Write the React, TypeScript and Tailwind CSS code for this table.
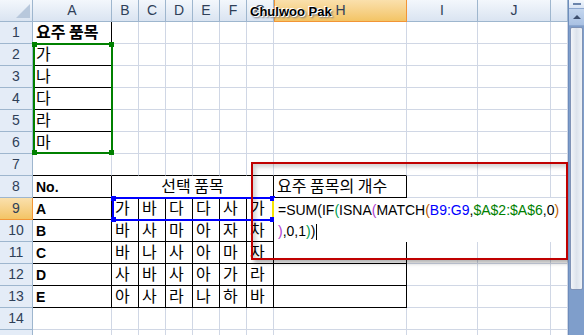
import React from "react";

type Cell = {
    w: string;
    t?: string;
    kr?: boolean;
    bold?: boolean;
    rb?: boolean;
    bb?: boolean;
    nb?: boolean;
    center?: boolean;
};

const colNames = ["A", "B", "C", "D", "E", "F", "G", "H", "I", "J", ""];
const colW = ["w-[79px]", "w-[27px]", "w-[27px]", "w-[27px]", "w-[27px]", "w-[27px]", "w-[27px]", "w-[133px]", "w-[71px]", "w-[73px]", "w-[17px]"];

const picks: Record<number, [string, string[]]> = {
    9: ["A", ["가", "바", "다", "다", "사", "가"]],
    10: ["B", ["바", "사", "마", "아", "자", "차"]],
    11: ["C", ["바", "나", "사", "아", "마", "자"]],
    12: ["D", ["사", "바", "사", "아", "가", "라"]],
    13: ["E", ["아", "사", "라", "나", "하", "바"]],
};

function buildRow(r: number): Cell[] {
    const cells: Cell[] = colW.map((w) => ({ w }));
    if (r === 1) {
        cells[0] = { w: colW[0], t: "요주 품목", kr: true, bold: true, rb: true, bb: true };
    }
    if (r >= 2 && r <= 6) {
        cells[0] = { w: colW[0], t: ["가", "나", "다", "라", "마"][r - 2], kr: true, rb: true, bb: true };
    }
    if (r === 7) {
        for (let i = 0; i < 8; i++) cells[i].bb = true;
    }
    if (r === 8) {
        return [
            { w: colW[0], t: "No.", bold: true, rb: true, bb: true },
            { w: "w-[162px]", t: "선택 품목", kr: true, center: true, rb: true, bb: true },
            { w: colW[7], t: "요주 품목의 개수", kr: true, rb: true, bb: true },
            { w: colW[8] },
            { w: colW[9] },
            { w: colW[10] },
        ];
    }
    if (picks[r]) {
        const [label, items] = picks[r];
        cells[0] = { w: colW[0], t: label, bold: true, rb: true, bb: true };
        items.forEach((ch, i) => {
            cells[i + 1] = { w: colW[i + 1], t: ch, kr: true, rb: true, bb: true };
        });
        cells[7] = { w: colW[7], rb: true, bb: true };
        if (r === 9) {
            cells[8].nb = true;
            cells[9].nb = true;
            cells[10].nb = true;
        }
    }
    return cells;
}

function Square({ className }: { className: string }) {
    return <div className={"absolute w-[5px] h-[5px] " + className}></div>;
}

function ScrollBar() {
    return (
        <div className="w-[16px] h-[335px] shrink-0 flex flex-col bg-[#7f9ecb] border-l border-[#6d8cbc]">
            <div className="h-[9px] bg-gradient-to-b from-[#f4f8fd] to-[#d7e3f3] border-b border-[#8ea8cf] flex items-center justify-center">
                <div className="w-[8px] h-[2px] bg-[#6b84ab]"></div>
            </div>
            <div className="h-[17px] bg-gradient-to-b from-[#c4d6ee] to-[#a9c1e3] flex items-center justify-center border-b border-[#8ea8cf]">
                <div className="w-0 h-0 border-l-[4px] border-r-[4px] border-b-[4px] border-l-transparent border-r-transparent border-b-[#3d4f6e]"></div>
            </div>
            <div className="h-[263px] mx-[1px] mt-[1px] rounded-[2px] border border-[#8093b6] bg-gradient-to-r from-[#f3f5f9] via-[#dde3ec] to-[#eef2f7]"></div>
            <div className="flex-1 bg-[#7f9ecb]"></div>
        </div>
    );
}

export default function App() {
    const rows = Array.from({ length: 15 }, (_, i) => i + 1);

    return (
        <div className="w-[584px] h-[335px] overflow-hidden flex bg-white font-['Liberation_Sans','Noto_Sans_CJK_KR',sans-serif]">
            <div className="relative w-[568px] h-[335px] shrink-0 overflow-hidden">
                {/* column headers */}
                <div className="flex h-[22px]">
                    <div className="w-[33px] h-[22px] shrink-0 border-r border-b border-[#9eb6ce] bg-gradient-to-b from-[#f3f7fc] to-[#dae4f1] relative">
                        <svg className="absolute left-0 top-0" width="32" height="21" viewBox="0 0 32 21">
                            <polygon points="30,4 30,18 16,18" fill="#b8c8dc" />
                        </svg>
                    </div>
                    {colNames.map((c, i) => (
                        <div
                            key={i}
                            className={
                                colW[i] +
                                " h-[22px] shrink-0 border-r border-b flex items-center justify-center text-[14px] text-[#2f3f58] " +
                                (c === "H"
                                    ? "bg-gradient-to-b from-[#fae0ac] to-[#f3c464] border-b-[#f29536] border-r-[#f29536] border-l border-l-[#f29536]"
                                    : "bg-gradient-to-b from-[#f3f7fc] to-[#dae4f1] border-[#9eb6ce]")
                            }
                        >
                            {c}
                        </div>
                    ))}
                </div>

                {rows.map((r) => (
                    <div key={r} className="flex h-[22px]">
                        <div
                            className={
                                "w-[33px] h-[22px] shrink-0 border-r border-b flex items-center justify-center text-[14px] text-[#2f3f58] " +
                                (r === 9
                                    ? "bg-gradient-to-b from-[#fae0ac] to-[#f3c464] border-[#f29536]"
                                    : "bg-[#e4ecf7] border-[#9eb6ce]")
                            }
                        >
                            {r}
                        </div>
                        {buildRow(r).map((c, i) => (
                            <div
                                key={i}
                                className={
                                    c.w +
                                    " h-[22px] shrink-0 border-r border-b px-[3px] whitespace-nowrap overflow-visible text-[#000] " +
                                    (c.rb ? "border-r-black " : "border-r-[#d0d7e5] ") +
                                    (c.bb ? "border-b-black " : c.nb ? "border-b-white " : "border-b-[#d0d7e5] ") +
                                    (c.kr
                                        ? "font-['Noto_Sans_CJK_KR',sans-serif] text-[16px] leading-[19px] "
                                        : "text-[14px] leading-[22px] ") +
                                    (c.bold ? "font-bold " : "") +
                                    (c.center ? "text-center " : "")
                                }
                            >
                                {c.t}
                            </div>
                        ))}
                    </div>
                ))}

                {/* formula range A2:A6 */}
                <div className="absolute left-[33px] top-[43px] w-[80px] h-[111px] border-2 border-[#008000]"></div>
                <Square className="left-[32px] top-[42px] bg-[#008000]" />
                <Square className="left-[109px] top-[42px] bg-[#008000]" />
                <Square className="left-[32px] top-[150px] bg-[#008000]" />
                <Square className="left-[109px] top-[150px] bg-[#008000]" />

                {/* formula range B9:G9 */}
                <div className="absolute left-[112px] top-[197px] w-[162px] h-[24px] border-2 border-[#0000ff] border-r-[#f5e400]"></div>
                <Square className="left-[111px] top-[196px] bg-[#0000ff]" />
                <Square className="left-[270px] top-[196px] bg-[#0000ff]" />
                <Square className="left-[111px] top-[217px] bg-[#0000ff]" />
                <Square className="left-[270px] top-[217px] bg-[#0000ff]" />

                {/* cell being edited */}
                <div className="absolute left-[274px] top-[198px] w-[294px] h-[44px] bg-white pl-[4px] pt-[2px] text-[14px] leading-[21px] text-black whitespace-nowrap">
                    <div>
                        =SUM<span>(</span>IF<span className="text-[#00a050]">(</span>ISNA<span className="text-[#b040d0]">(</span>MATCH<span className="text-[#c06000]">(</span>
                        <span className="text-[#0000ff]">B9:G9</span>,<span className="text-[#008000]">$A$2:$A$6</span>,0<span className="text-[#c06000]">)</span>
                    </div>
                    <div className="flex items-center">
                        <span className="text-[#b040d0]">)</span>,0,1<span className="text-[#00a050]">)</span>)
                        <span className="inline-block w-[1px] h-[16px] bg-black ml-[1px]"></span>
                    </div>
                </div>

                {/* red callout box */}
                <div className="absolute left-[251px] top-[162px] w-[317px] h-[98px] border-2 border-[#c00000] shadow-[3px_3px_4px_rgba(0,0,0,0.3),inset_3px_3px_4px_rgba(0,0,0,0.18)]"></div>

                {/* signature */}
                <div className="absolute left-[250px] top-[2px] text-[13px] font-bold text-black [text-shadow:1px_1px_0_#fff,-1px_-1px_0_#fff,2px_2px_2px_#777]">
                    Chulwoo Pak
                </div>
            </div>
            <ScrollBar />
        </div>
    );
}
